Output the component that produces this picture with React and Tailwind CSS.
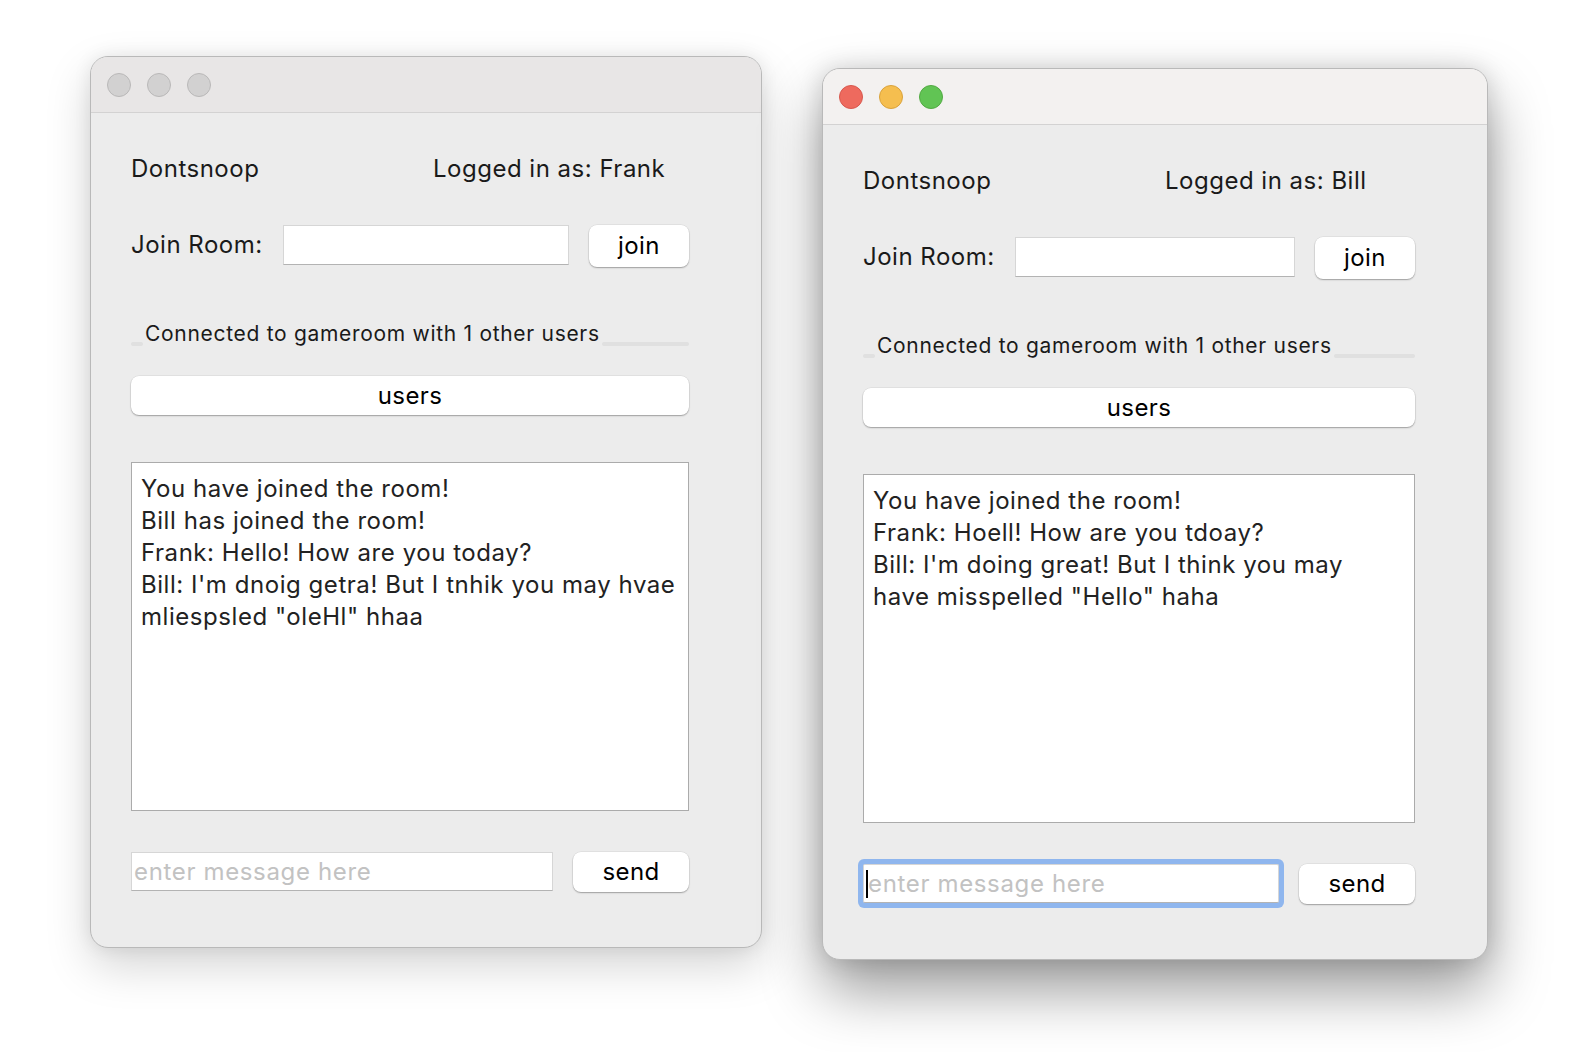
const font = { fontFamily: "Inter, 'Noto Sans', sans-serif" };

function Lights({ active }) {
  if (!active) {
    return (
      <div className="flex items-center gap-[16px] pl-[16px]">
        <span className="w-[24px] h-[24px] rounded-full bg-[#d2d1d1] border border-[#b9b8b8]" />
        <span className="w-[24px] h-[24px] rounded-full bg-[#d2d1d1] border border-[#b9b8b8]" />
        <span className="w-[24px] h-[24px] rounded-full bg-[#d2d1d1] border border-[#b9b8b8]" />
      </div>
    );
  }
  return (
    <div className="flex items-center gap-[16px] pl-[16px]">
      <span className="w-[24px] h-[24px] rounded-full bg-[#ee6a5e] border border-[#d7584e]" />
      <span className="w-[24px] h-[24px] rounded-full bg-[#f5be4f] border border-[#d9a23c]" />
      <span className="w-[24px] h-[24px] rounded-full bg-[#61c454] border border-[#52a943]" />
    </div>
  );
}

function Button({ children, className = "" }) {
  return (
    <button className={`bg-white rounded-[8px] text-black text-[24px] tracking-[0.4px] leading-none shadow-[0_1px_1.5px_rgba(0,0,0,0.3),0_0_0_0.5px_rgba(0,0,0,0.08)] ${className}`}>
      {children}
    </button>
  );
}

function ChatWindow({ user, lines, width, focused, className = "" }) {
  return (
    <div
      style={{ ...font, width }}
      className={`h-[892px] shrink-0 rounded-[18px] overflow-hidden bg-[#ececec] border border-[#b9b9b9] ${
        focused
          ? "shadow-[0_30px_60px_rgba(0,0,0,0.4),0_0_24px_rgba(0,0,0,0.14)]"
          : "shadow-[0_18px_45px_rgba(0,0,0,0.17),0_0_18px_rgba(0,0,0,0.08)]"
      } ${className}`}
    >
      <div
        className={`h-[56px] flex items-center border-b border-[#d3d2d2] ${
          focused ? "bg-[#f3f1f0]" : "bg-[#e8e6e6]"
        }`}
      >
        <Lights active={focused} />
      </div>

      <div className="pl-[40px] pr-[72px] text-[#1a1a1a] tracking-[0.5px]">
        <div className="mt-[41px] h-[30px] flex items-center text-[24px]">
          <div className="w-[302px]">Dontsnoop</div>
          <div>Logged in as: {user}</div>
        </div>

        <div className="mt-[41px] h-[42px] flex items-start">
          <div className="w-[152px] h-[40px] flex items-center text-[24px]">Join Room:</div>
          <div className="flex-1 h-[40px] bg-white border border-[#d6d6d6] border-b-[#b3b3b3]" />
          <Button className="ml-[20px] w-[100px] h-[42px]">join</Button>
        </div>

        <div className="mt-[55px] h-[24px] flex items-end">
          <div className="w-[12px] h-[4px] rounded-full bg-[#e0e0e0]" />
          <div className="px-[2px] text-[21px] tracking-[0.7px] leading-[24px] whitespace-nowrap">
            Connected to gameroom with 1 other users
          </div>
          <div className="flex-1 h-[4px] rounded-full bg-[#e0e0e0]" />
        </div>

        <Button className="mt-[30px] w-full h-[39px] block">users</Button>

        <div className="mt-[47px] h-[349px] bg-white border border-[#ababab] pt-[10px] pl-[9px] text-[24px] tracking-[0.55px] leading-[32px] text-[#222]">
          {lines.map((l, i) => (
            <div key={i} className="whitespace-nowrap">{l}</div>
          ))}
        </div>

        <div className="mt-[41px] h-[40px] flex items-start">
          <div
            className={`flex-1 h-[39px] bg-white border border-[#d6d6d6] border-b-[#b3b3b3] flex items-center pl-[2px] text-[24px] tracking-[0.65px] text-[#c2c2c2] ${
              focused ? "ring-[5px] ring-[#8fb6ee] rounded-[2px]" : ""
            }`}
          >
            {focused && <span className="w-[2px] h-[28px] bg-black" />}
            enter message here
          </div>
          <Button className="ml-[20px] w-[116px] h-[40px]">send</Button>
        </div>
      </div>
    </div>
  );
}

export default function App() {
  return (
    <div className="w-[1584px] h-[1052px] bg-white overflow-hidden flex items-start pl-[90px] pt-[56px] gap-[60px]">
      <ChatWindow
        user="Frank"
        width={672}
        lines={[
          "You have joined the room!",
          "Bill has joined the room!",
          "Frank: Hello! How are you today?",
          "Bill: I'm dnoig getra! But I tnhik you may hvae",
          'mliespsled "oleHl" hhaa',
        ]}
      />
      <ChatWindow
        user="Bill"
        width={666}
        focused
        className="mt-[12px]"
        lines={[
          "You have joined the room!",
          "Frank: Hoell! How are you tdoay?",
          "Bill: I'm doing great! But I think you may",
          'have misspelled "Hello" haha',
        ]}
      />
    </div>
  );
}
